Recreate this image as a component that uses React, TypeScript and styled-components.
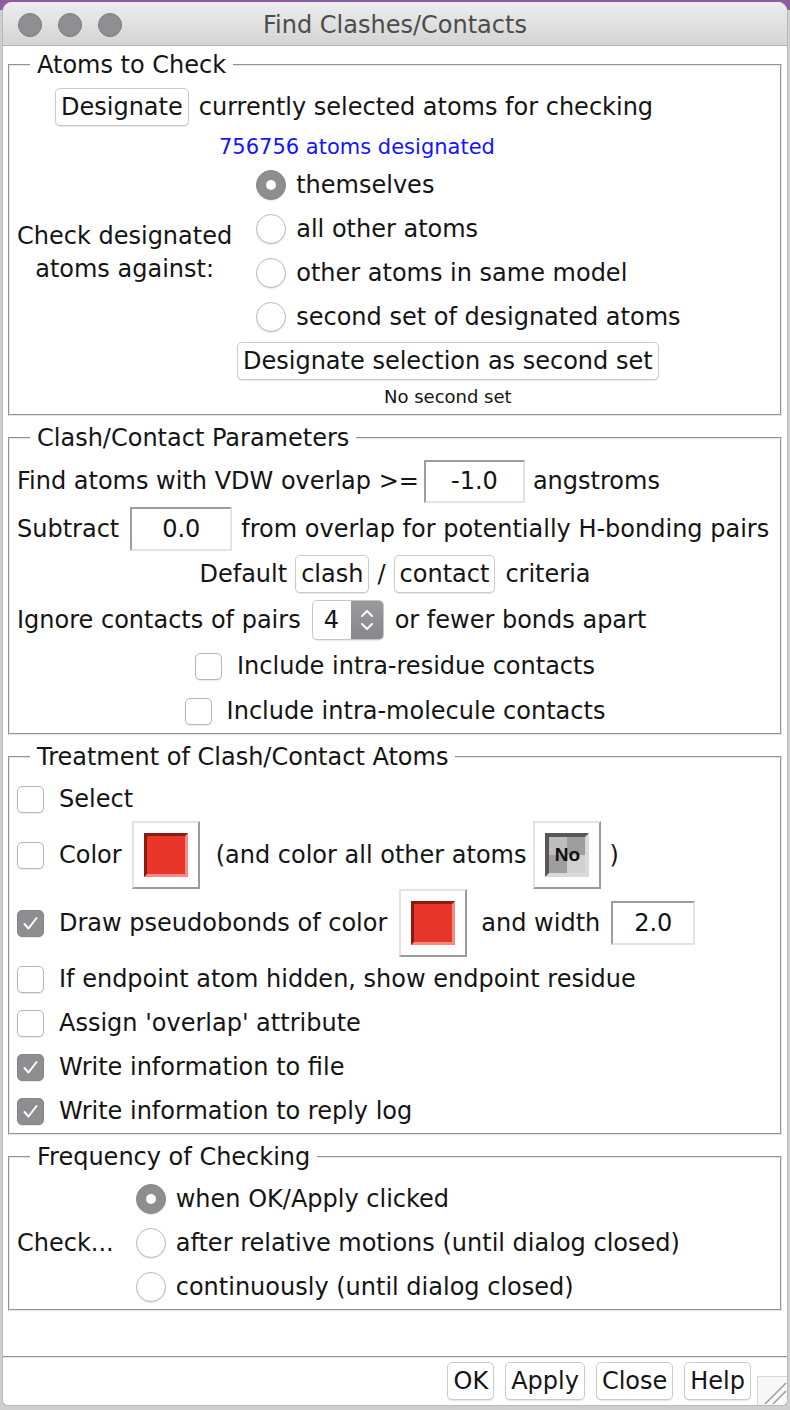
import React from "react";
import styled, { createGlobalStyle } from "styled-components";

const GlobalStyle = createGlobalStyle`
  html, body { margin: 0; padding: 0; }
  body { background: #cccccc; font-family: "DejaVu Sans", "Liberation Sans", sans-serif; color: #141414; }
  * { box-sizing: border-box; }
`;

const Screen = styled.div`
  width: 790px;
  height: 1410px;
  background: linear-gradient(#8d5e9f 0, #8d5e9f 10px, #cfcfcf 10px);
  padding: 2px 2px 0;
  overflow: hidden;
`;

const Window = styled.div`
  height: 1404px;
  background: #fff;
  border: 1px solid #b9b9b9;
  border-top: none;
  border-radius: 10px 10px 6px 6px;
  overflow: hidden;
  display: flex;
  flex-direction: column;
`;

const TitleBar = styled.div`
  flex: none;
  height: 44px;
  display: grid;
  grid-template-columns: 1fr auto 1fr;
  align-items: center;
  padding: 3px 15px 0;
  background: linear-gradient(#ededed, #d4d4d4);
  border-bottom: 1px solid #b3b3b3;
`;

const Lights = styled.div`
  display: flex;
  gap: 16px;
`;

const Light = styled.span`
  width: 24px;
  height: 24px;
  border-radius: 50%;
  background: #8f8f91;
  border: 1px solid #7c7c7e;
`;

const Title = styled.div`
  font-size: 24px;
  color: #4c4c4c;
  white-space: nowrap;
`;

const Body = styled.div`
  flex: 1;
  display: flex;
  flex-direction: column;
  padding: 5px 5px 0;
`;

const Group = styled.fieldset<{ $pt: number; $pb: number }>`
  margin: 0 0 8px;
  padding: ${(p) => p.$pt}px 7px ${(p) => p.$pb}px;
  border: 2px groove #e6e6e6;
  min-width: 0;
`;

const Legend = styled.legend`
  font-size: 24px;
  line-height: 28px;
  padding: 0 7px;
  margin-left: 13px;
  color: #141414;
`;

const Row = styled.div<{ $h: number; $gap?: number; $indent?: number; $center?: boolean; $mt?: number }>`
  display: flex;
  align-items: center;
  height: ${(p) => p.$h}px;
  gap: ${(p) => p.$gap ?? 10}px;
  padding-left: ${(p) => p.$indent ?? 0}px;
  justify-content: ${(p) => (p.$center ? "center" : "flex-start")};
  margin-top: ${(p) => p.$mt ?? 0}px;
`;

const Text = styled.span<{ $ml?: number }>`
  font-size: 24px;
  line-height: 28px;
  white-space: nowrap;
  margin-left: ${(p) => p.$ml ?? 0}px;
`;

const BlueNote = styled.div`
  font-size: 21px;
  line-height: 28px;
  color: #1414ff;
  margin: 7px 0 0 202px;
`;

const PushButton = styled.button`
  flex: none;
  font-family: "DejaVu Sans", "Liberation Sans", sans-serif;
  font-size: 24px;
  line-height: 1;
  height: 38px;
  padding: 0 5px;
  color: #141414;
  background: #fff;
  border: 1px solid #cbcbcb;
  border-radius: 5px;
  box-shadow: 0 1px 1px rgba(0, 0, 0, 0.1);
`;

const Entry = styled.input<{ $w: number; $h: number; $ml?: number }>`
  flex: none;
  width: ${(p) => p.$w}px;
  height: ${(p) => p.$h}px;
  margin-left: ${(p) => p.$ml ?? 0}px;
  border: 2px solid;
  border-color: #9d9d9d #e3e3e3 #e3e3e3 #9d9d9d;
  background: #fff;
  font-family: "DejaVu Sans", "Liberation Sans", sans-serif;
  font-size: 24px;
  color: #141414;
  text-align: center;
  padding: 0;
  outline: none;
`;

const Spin = styled.div`
  flex: none;
  display: flex;
  width: 72px;
  height: 40px;
  border: 1px solid #c6c6c6;
  border-radius: 5px;
  background: #fff;
  overflow: hidden;
  box-shadow: 0 1px 1px rgba(0, 0, 0, 0.08);
`;

const SpinValue = styled.span`
  flex: 1;
  display: flex;
  align-items: center;
  padding-left: 11px;
  font-size: 24px;
`;

const SpinStep = styled.div`
  width: 32px;
  background: linear-gradient(#9a9a9d, #87878a);
  display: flex;
  align-items: center;
  justify-content: center;
`;

const Box = styled.span<{ $on?: boolean }>`
  flex: none;
  width: 27px;
  height: 27px;
  border-radius: 5px;
  border: 1px solid ${(p) => (p.$on ? "#858588" : "#b6b6b6")};
  background: ${(p) => (p.$on ? "#8e8e91" : "#fff")};
  box-shadow: 0 1px 1px rgba(0, 0, 0, 0.08);
  display: flex;
  align-items: center;
  justify-content: center;
`;

const RadioDot = styled.span<{ $on?: boolean }>`
  flex: none;
  width: 30px;
  height: 30px;
  border-radius: 50%;
  border: 1px solid ${(p) => (p.$on ? "#858588" : "#b9b9b9")};
  background: ${(p) => (p.$on ? "#8e8e91" : "#fff")};
  box-shadow: 0 1px 1px rgba(0, 0, 0, 0.1);
  display: flex;
  align-items: center;
  justify-content: center;
  &::after {
    content: "";
    display: ${(p) => (p.$on ? "block" : "none")};
    width: 10px;
    height: 10px;
    border-radius: 50%;
    background: #fff;
  }
`;

const ChoiceGrid = styled.div<{ $gap: number }>`
  display: grid;
  grid-template-columns: auto auto;
  justify-content: start;
  align-items: center;
  column-gap: ${(p) => p.$gap}px;
`;

const ChoiceLabel = styled.div<{ $shift?: number }>`
  font-size: 24px;
  line-height: 33px;
  text-align: center;
  white-space: nowrap;
  padding-top: ${(p) => p.$shift ?? 0}px;
`;

const RadioList = styled.div<{ $mt?: number }>`
  display: flex;
  flex-direction: column;
  margin-top: ${(p) => p.$mt ?? 0}px;
`;

const RadioRow = styled.div`
  display: flex;
  align-items: center;
  gap: 10px;
  height: 44px;
`;

const SecondSet = styled.div`
  align-self: flex-start;
  display: flex;
  flex-direction: column;
  align-items: center;
  margin: 3px 0 0 220px;
`;

const SmallNote = styled.div`
  font-size: 18px;
  line-height: 34px;
`;

const GroupBody = styled.div`
  display: flex;
  flex-direction: column;
`;

const Well = styled.div<{ $ml?: number }>`
  flex: none;
  width: 68px;
  height: 68px;
  margin-left: ${(p) => p.$ml ?? 0}px;
  border: 2px solid;
  border-color: #e3e3e3 #9b9b9b #9b9b9b #e3e3e3;
  background: #fff;
  display: flex;
  align-items: center;
  justify-content: center;
`;

const Swatch = styled.div`
  width: 44px;
  height: 44px;
  border: 3px solid;
  border-color: #8a1b12 #f28b82 #f28b82 #8a1b12;
  background: #e8372a;
`;

const NoSwatch = styled.div`
  width: 44px;
  height: 44px;
  border: 4px solid;
  border-color: #575757 #dadada #dadada #575757;
  background: conic-gradient(#9e9e9e 0 25%, #d0d0d0 0 50%, #9e9e9e 0 75%, #bdbdbd 0);
  display: flex;
  align-items: center;
  justify-content: center;
  font-family: "Liberation Sans", Arial, sans-serif;
  font-weight: bold;
  font-size: 19px;
  color: #111;
`;

const Spacer = styled.div`
  flex: 1;
`;

const Footer = styled.div`
  flex: none;
  height: 49px;
  border-top: 2px groove #e6e6e6;
  display: flex;
  justify-content: flex-end;
  align-items: flex-start;
  gap: 11px;
  padding-top: 4px;
`;

const Grip = styled.svg`
  align-self: flex-end;
  margin-left: -5px;
  flex: none;
`;

const Check = () => (
  <svg width="19" height="19" viewBox="0 0 19 19">
    <path d="M3.5 10 L7.5 14.5 L15.5 4" fill="none" stroke="#fff" strokeWidth="2" strokeLinecap="round" strokeLinejoin="round" />
  </svg>
);

const CheckBox = ({ on }: { on?: boolean }) => <Box $on={on}>{on && <Check />}</Box>;

const Radio = ({ on, label }: { on?: boolean; label: string }) => (
  <RadioRow>
    <RadioDot $on={on} />
    <Text>{label}</Text>
  </RadioRow>
);

const Spinner = ({ value }: { value: string }) => (
  <Spin>
    <SpinValue>{value}</SpinValue>
    <SpinStep>
      <svg width="20" height="30" viewBox="0 0 20 30">
        <path d="M5 11 L10 6 L15 11" fill="none" stroke="#fff" strokeWidth="2" strokeLinecap="round" strokeLinejoin="round" />
        <path d="M5 19 L10 24 L15 19" fill="none" stroke="#fff" strokeWidth="2" strokeLinecap="round" strokeLinejoin="round" />
      </svg>
    </SpinStep>
  </Spin>
);

export default function App() {
  return (
    <>
      <GlobalStyle />
      <Screen>
        <Window>
          <TitleBar>
            <Lights>
              <Light />
              <Light />
              <Light />
            </Lights>
            <Title>Find Clashes/Contacts</Title>
            <span />
          </TitleBar>
          <Body>
            <Group $pt={9} $pb={0}>
              <Legend>Atoms to Check</Legend>
              <GroupBody>
                <Row $h={38} $indent={38}>
                  <PushButton>Designate</PushButton>
                  <Text>currently selected atoms for checking</Text>
                </Row>
                <BlueNote>756756 atoms designated</BlueNote>
                <ChoiceGrid $gap={24}>
                  <ChoiceLabel $shift={6}>
                    Check designated
                    <br />
                    atoms against:
                  </ChoiceLabel>
                  <RadioList $mt={2}>
                    <Radio on label="themselves" />
                    <Radio label="all other atoms" />
                    <Radio label="other atoms in same model" />
                    <Radio label="second set of designated atoms" />
                  </RadioList>
                </ChoiceGrid>
                <SecondSet>
                  <PushButton>Designate selection as second set</PushButton>
                  <SmallNote>No second set</SmallNote>
                </SecondSet>
              </GroupBody>
            </Group>

            <Group $pt={7} $pb={0}>
              <Legend>Clash/Contact Parameters</Legend>
              <GroupBody>
                <Row $h={44} $gap={5}>
                  <Text>Find atoms with VDW overlap &gt;=</Text>
                  <Entry $w={101} $h={43} readOnly value="-1.0" />
                  <Text $ml={3}>angstroms</Text>
                </Row>
                <Row $h={44} $mt={4} $gap={9}>
                  <Text>Subtract</Text>
                  <Entry $w={102} $h={44} $ml={2} readOnly value="0.0" />
                  <Text>from overlap for potentially H-bonding pairs</Text>
                </Row>
                <Row $h={46} $center $gap={8}>
                  <Text>Default</Text>
                  <PushButton>clash</PushButton>
                  <Text>/</Text>
                  <PushButton>contact</PushButton>
                  <Text $ml={2}>criteria</Text>
                </Row>
                <Row $h={46} $gap={11}>
                  <Text>Ignore contacts of pairs</Text>
                  <Spinner value="4" />
                  <Text>or fewer bonds apart</Text>
                </Row>
                <Row $h={46} $center $gap={15}>
                  <CheckBox />
                  <Text>Include intra-residue contacts</Text>
                </Row>
                <Row $h={44} $center $gap={15}>
                  <CheckBox />
                  <Text>Include intra-molecule contacts</Text>
                </Row>
              </GroupBody>
            </Group>

            <Group $pt={6} $pb={0}>
              <Legend>Treatment of Clash/Contact Atoms</Legend>
              <GroupBody>
                <Row $h={44} $gap={15}>
                  <CheckBox />
                  <Text>Select</Text>
                </Row>
                <Row $h={68} $gap={10}>
                  <CheckBox />
                  <Text $ml={5}>Color</Text>
                  <Well>
                    <Swatch />
                  </Well>
                  <Text $ml={6}>(and color all other atoms</Text>
                  <Well $ml={-3}>
                    <NoSwatch>No</NoSwatch>
                  </Well>
                  <Text $ml={-2}>)</Text>
                </Row>
                <Row $h={68} $gap={10}>
                  <CheckBox on />
                  <Text $ml={5}>Draw pseudobonds of color</Text>
                  <Well $ml={2}>
                    <Swatch />
                  </Well>
                  <Text $ml={4}>and width</Text>
                  <Entry $w={84} $h={44} $ml={1} readOnly value="2.0" />
                </Row>
                <Row $h={44} $gap={15}>
                  <CheckBox />
                  <Text>If endpoint atom hidden, show endpoint residue</Text>
                </Row>
                <Row $h={44} $gap={15}>
                  <CheckBox />
                  <Text>Assign 'overlap' attribute</Text>
                </Row>
                <Row $h={44} $gap={15}>
                  <CheckBox on />
                  <Text>Write information to file</Text>
                </Row>
                <Row $h={44} $gap={15}>
                  <CheckBox on />
                  <Text>Write information to reply log</Text>
                </Row>
              </GroupBody>
            </Group>

            <Group $pt={6} $pb={0}>
              <Legend>Frequency of Checking</Legend>
              <ChoiceGrid $gap={22}>
                <ChoiceLabel>Check...</ChoiceLabel>
                <RadioList>
                  <Radio on label="when OK/Apply clicked" />
                  <Radio label="after relative motions (until dialog closed)" />
                  <Radio label="continuously (until dialog closed)" />
                </RadioList>
              </ChoiceGrid>
            </Group>

            <Spacer />
          </Body>
          <Footer>
            <PushButton>OK</PushButton>
            <PushButton>Apply</PushButton>
            <PushButton>Close</PushButton>
            <PushButton>Help</PushButton>
            <Grip width="30" height="29" viewBox="0 0 30 29">
              <rect x="0.5" y="0.5" width="30" height="29" fill="#f7f7f7" stroke="#d8d8d8" />
              <line x1="8" y1="28" x2="29" y2="7" stroke="#9a9a9a" strokeWidth="1.5" />
              <line x1="16" y1="28" x2="29" y2="15" stroke="#9a9a9a" strokeWidth="1.5" />
            </Grip>
          </Footer>
        </Window>
      </Screen>
    </>
  );
}
